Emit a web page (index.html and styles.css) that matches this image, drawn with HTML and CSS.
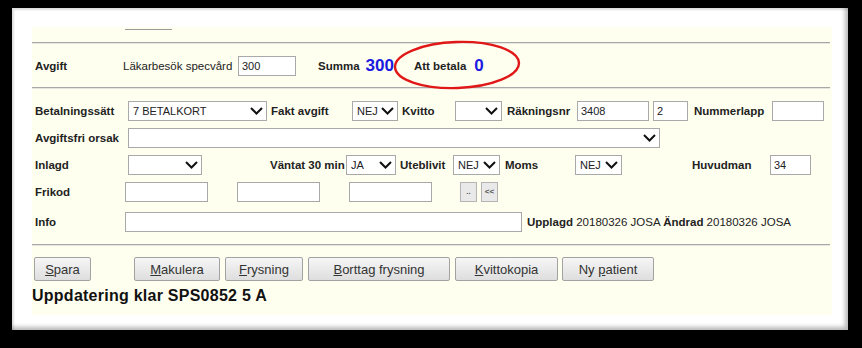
FILE: index.html
```html
<!DOCTYPE html>
<html lang="sv">
<head>
  <meta charset="UTF-8">
  <title>Avgift</title>
  <link rel="stylesheet" href="styles.css">
</head>
<body>
  <div class="window">
    <div class="panel">
      <div class="stub"></div>
      <div class="sep"></div>

      <div class="row fee-row">
        <span class="lbl w88">Avgift</span>
        <span class="txt w110">Läkarbesök specvård</span>
        <input class="field w58 ml5" type="text" value="300">
        <span class="lbl ml22">Summa</span>
        <span class="amount ml6">300</span>
        <span class="lbl ml20">Att betala</span>
        <span class="amount ml8">0</span>
      </div>
      <svg class="circle" width="134" height="54" viewBox="0 0 134 54">
        <ellipse cx="66" cy="27" rx="62" ry="23" fill="none" stroke="#e01818" stroke-width="2.4" transform="rotate(-2 66 27)"/>
      </svg>
      <div class="sep"></div>

      <div class="form">
        <div class="row">
          <span class="lbl w93">Betalningssätt</span>
          <div class="select w139"><span>7 BETALKORT</span><svg width="13" height="8" viewBox="0 0 13 8"><path d="M1 1l5.5 5.5L12 1" fill="none" stroke="#111" stroke-width="2"/></svg></div>
          <span class="lbl w81 ml4">Fakt avgift</span>
          <div class="select w46"><span>NEJ</span><svg width="13" height="8" viewBox="0 0 13 8"><path d="M1 1l5.5 5.5L12 1" fill="none" stroke="#111" stroke-width="2"/></svg></div>
          <span class="lbl w53 ml4">Kvitto</span>
          <div class="select w47"><span></span><svg width="13" height="8" viewBox="0 0 13 8"><path d="M1 1l5.5 5.5L12 1" fill="none" stroke="#111" stroke-width="2"/></svg></div>
          <span class="lbl w70 ml5">Räkningsnr</span>
          <input class="field w72" type="text" value="3408">
          <input class="field w35 ml4" type="text" value="2">
          <span class="lbl w78 ml6">Nummerlapp</span>
          <input class="field w52" type="text" value="">
        </div>

        <div class="row">
          <span class="lbl w93">Avgiftsfri orsak</span>
          <div class="select w532"><span></span><svg width="13" height="8" viewBox="0 0 13 8"><path d="M1 1l5.5 5.5L12 1" fill="none" stroke="#111" stroke-width="2"/></svg></div>
        </div>

        <div class="row">
          <span class="lbl w93">Inlagd</span>
          <div class="select w74"><span></span><svg width="13" height="8" viewBox="0 0 13 8"><path d="M1 1l5.5 5.5L12 1" fill="none" stroke="#111" stroke-width="2"/></svg></div>
          <span class="lbl w76 ml68">Väntat 30 min</span>
          <div class="select w50"><span>JA</span><svg width="13" height="8" viewBox="0 0 13 8"><path d="M1 1l5.5 5.5L12 1" fill="none" stroke="#111" stroke-width="2"/></svg></div>
          <span class="lbl w53 ml4">Uteblivit</span>
          <div class="select w47"><span>NEJ</span><svg width="13" height="8" viewBox="0 0 13 8"><path d="M1 1l5.5 5.5L12 1" fill="none" stroke="#111" stroke-width="2"/></svg></div>
          <span class="lbl w70 ml5">Moms</span>
          <div class="select w47"><span>NEJ</span><svg width="13" height="8" viewBox="0 0 13 8"><path d="M1 1l5.5 5.5L12 1" fill="none" stroke="#111" stroke-width="2"/></svg></div>
          <span class="lbl w78 ml70">Huvudman</span>
          <input class="field w41" type="text" value="34">
        </div>

        <div class="row">
          <span class="lbl w90">Frikod</span>
          <input class="field w83" type="text" value="">
          <input class="field w83 ml29" type="text" value="">
          <input class="field w83 ml29" type="text" value="">
          <button class="mini ml28">..</button>
          <button class="mini ml4">&lt;&lt;</button>
        </div>

        <div class="row info-row">
          <span class="lbl w90">Info</span>
          <input class="field w397" type="text" value="">
          <span class="meta ml5"><b>Upplagd</b> 20180326 JOSA <b>Ändrad</b> 20180326 JOSA</span>
        </div>
      </div>

      <div class="sep sep-low"></div>

      <div class="buttons">
        <button class="btn w57"><u>S</u>para</button>
        <button class="btn w86 ml43"><u>M</u>akulera</button>
        <button class="btn w78 ml5"><u>F</u>rysning</button>
        <button class="btn w142 ml5"><u>B</u>orttag frysning</button>
        <button class="btn w103 ml5"><u>K</u>vittokopia</button>
        <button class="btn w92 ml4">Ny <u>p</u>atient</button>
      </div>

      <div class="status">Uppdatering klar SPS0852 5 A</div>
    </div>
  </div>
</body>
</html>
```

FILE: styles.css
```css
body {
  margin: 0;
  background-color: #000;
  font-family: "Liberation Sans", Arial, sans-serif;
  font-size: 11.5px;
  color: #222;
}
.window {
  margin: 8px 0 0 12px;
  width: 836px;
  height: 322px;
  box-sizing: border-box;
  padding: 19px 16px 15px 20px;
  background-color: #fff;
  box-shadow: inset -3px -3px 4px rgba(0, 0, 0, 0.28), inset 2px 2px 2px rgba(0, 0, 0, 0.12);
}
.panel {
  position: relative;
  height: 100%;
  padding-left: 3px;
  background-color: #fffff0;
}
.stub {
  width: 47px;
  height: 2px;
  margin-left: 90px;
  border-bottom: 1px solid #9a9a9a;
}
.sep {
  height: 0;
  margin: 12px 2px 0 -3px;
  border-top: 1px solid #a8a8a8;
  border-bottom: 1px solid #e6e6e0;
}
.fee-row {
  height: 43px !important;
}
.fee-row + .circle + .sep {
  margin-top: 0;
}
.circle {
  position: absolute;
  left: 359px;
  top: 11px;
}
.row {
  display: flex;
  align-items: center;
  height: 27px;
}
.form {
  margin-top: 8px;
}
.info-row {
  margin-top: 3px;
}
.sep-low {
  margin-top: 9px;
}
.lbl {
  font-weight: bold;
  white-space: nowrap;
  flex: none;
}
.txt {
  flex: none;
  white-space: nowrap;
}
.amount {
  font-size: 17px;
  font-weight: bold;
  color: #1a1ae0;
  line-height: 1;
}
.field {
  flex: none;
  height: 20px;
  box-sizing: border-box;
  padding: 0 3px;
  border: 1px solid #a9a9a9;
  background: #fff;
  font-family: inherit;
  font-size: 11px;
  color: #222;
}
.select {
  flex: none;
  display: flex;
  align-items: center;
  justify-content: space-between;
  height: 20px;
  box-sizing: border-box;
  padding: 0 3px 0 4px;
  border: 1px solid #a9a9a9;
  background: #fff;
  font-size: 11px;
}
.mini {
  width: 17px;
  height: 20px;
  padding: 0;
  border: 1px solid #b4b4b4;
  background: #e9e9e9;
  font-family: inherit;
  font-size: 8px;
  font-weight: bold;
  color: #555;
}
.meta {
  white-space: nowrap;
}
.buttons {
  display: flex;
  margin-top: 11px;
  margin-left: -1px;
}
.btn {
  height: 24px;
  padding: 0;
  border: 1px solid #a2a2a2;
  border-radius: 2px;
  background: linear-gradient(#f6f6f6, #dedede);
  font-family: inherit;
  font-size: 13px;
  color: #333;
}
.status {
  margin: 6px 0 0 -3px;
  font-size: 16px;
  font-weight: bold;
  line-height: 18px;
  letter-spacing: 0.25px;
  color: #111;
}

.w35 { width: 35px; }
.w41 { width: 41px; }
.w46 { width: 46px; }
.w47 { width: 47px; }
.w50 { width: 50px; }
.w52 { width: 52px; }
.w53 { width: 53px; }
.w57 { width: 57px; }
.w58 { width: 58px; }
.w70 { width: 70px; }
.w72 { width: 72px; }
.w74 { width: 74px; }
.w76 { width: 76px; }
.w78 { width: 78px; }
.w81 { width: 81px; }
.w83 { width: 83px; }
.w86 { width: 86px; }
.w88 { width: 88px; }
.w90 { width: 90px; }
.w92 { width: 92px; }
.w93 { width: 93px; }
.w103 { width: 103px; }
.w110 { width: 110px; }
.w139 { width: 139px; }
.w142 { width: 142px; }
.w397 { width: 397px; }
.w532 { width: 532px; }

.ml4 { margin-left: 4px; }
.ml5 { margin-left: 5px; }
.ml6 { margin-left: 6px; }
.ml8 { margin-left: 8px; }
.ml20 { margin-left: 20px; }
.ml22 { margin-left: 22px; }
.ml28 { margin-left: 28px; }
.ml29 { margin-left: 29px; }
.ml43 { margin-left: 43px; }
.ml68 { margin-left: 68px; }
.ml70 { margin-left: 70px; }
```
